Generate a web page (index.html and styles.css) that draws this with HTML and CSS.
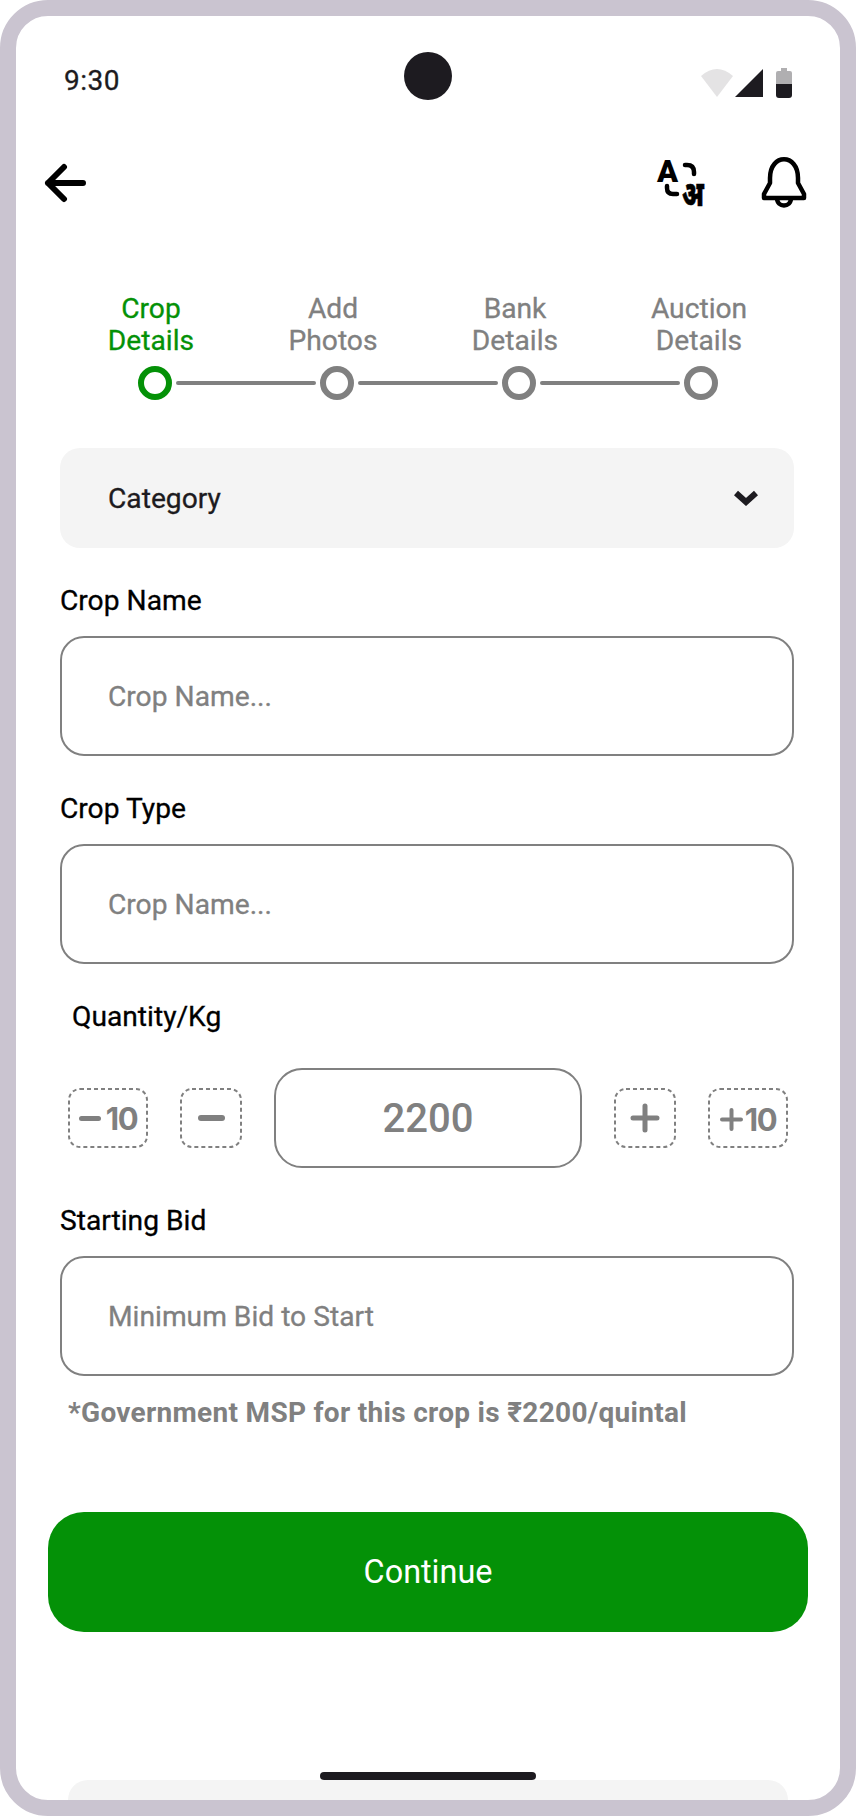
FILE: index.html
```html
<!DOCTYPE html>
<html lang="en">
<head>
  <meta charset="UTF-8">
  <meta name="viewport" content="width=device-width, initial-scale=1.0">
  <title>Crop Details</title>
  <link rel="stylesheet" href="styles.css">
</head>
<body>
  <div class="phone">
    <!-- status bar -->
    <div class="status">
      <span class="time">9:30</span>
      <span class="camera"></span>
      <div class="status-icons">
        <svg width="32" height="28" viewBox="0 0 32 28"><path d="M0 7 Q16 -7 32 7 L16 28 Z" fill="#1d1b20" opacity=".12"/></svg>
        <svg width="28" height="28" viewBox="0 0 28 28"><path d="M28 0 V28 H0 Z" fill="#1d1b20"/></svg>
        <svg class="battery" width="16" height="30" viewBox="0 0 16 30"><path d="M5 0 H11 V3 H14 Q16 3 16 5 V16 H0 V5 Q0 3 2 3 H5 Z" fill="#1d1b20" opacity=".35"/><path d="M0 16 H16 V27 Q16 30 13 30 H3 Q0 30 0 27 Z" fill="#1d1b20"/></svg>
      </div>
    </div>

    <!-- top bar -->
    <div class="topbar">
      <svg width="44" height="40" viewBox="0 0 44 40" fill="none" stroke="#000" stroke-width="6" stroke-linecap="round" stroke-linejoin="round"><path d="M39 20 H4 M20 4 L4 20 L20 36"/></svg>
      <div class="top-actions">
        <svg width="64" height="72" viewBox="0 0 64 72">
          <text x="7" y="35" class="lang-a">A</text>
          <text transform="translate(32 59) scale(.8 1.15)" class="lang-hi">अ</text>
          <path d="M35 18 H37 Q44 18 44 25 V27 M17 39 V41 Q17 47 23 47 H27" fill="none" stroke="#000" stroke-width="4.5" stroke-linecap="round"/>
        </svg>
        <svg width="46" height="52" viewBox="0 0 46 52" fill="none" stroke="#000" stroke-width="4.5" stroke-linejoin="round"><path d="M9 26 V21 C9 -4 37 -4 37 21 V26 L43 37 V41 H3 V37 Z"/><path d="M16 41 C16 51 30 51 30 41"/></svg>
      </div>
    </div>

    <!-- steps -->
    <div class="steps">
      <div class="step active">Crop<br>Details</div>
      <div class="step">Add<br>Photos</div>
      <div class="step">Bank<br>Details</div>
      <div class="step">Auction<br>Details</div>
    </div>
    <div class="track">
      <span class="dot active"></span><span class="bar"></span>
      <span class="dot"></span><span class="bar"></span>
      <span class="dot"></span><span class="bar"></span>
      <span class="dot"></span>
    </div>

    <div class="form">
      <div class="select">
        <span>Category</span>
        <svg width="24" height="16" viewBox="0 0 24 16" fill="none" stroke="#1d1b20" stroke-width="6"><path d="M2 3 L12 12 L22 3"/></svg>
      </div>

      <label class="label">Crop Name</label>
      <div class="input">Crop Name...</div>

      <label class="label">Crop Type</label>
      <div class="input">Crop Name...</div>

      <label class="label label-qty">Quantity/Kg</label>
      <div class="qty">
        <div class="qty-btn wide">
          <svg width="22" height="5" viewBox="0 0 22 5"><rect width="22" height="5" rx="2.5" fill="#808080"/></svg>
          <span>10</span>
        </div>
        <div class="qty-btn"><svg width="27" height="6" viewBox="0 0 27 6"><rect width="27" height="6" rx="3" fill="#808080"/></svg></div>
        <div class="qty-value">2200</div>
        <div class="qty-btn"><svg width="30" height="30" viewBox="0 0 30 30" stroke="#808080" stroke-width="5" stroke-linecap="round"><path d="M3 15 H27 M15 3 V27"/></svg></div>
        <div class="qty-btn wide plus">
          <svg width="23" height="23" viewBox="0 0 23 23" stroke="#808080" stroke-width="4" stroke-linecap="round"><path d="M2 11.5 H21 M11.5 2 V21"/></svg>
          <span>10</span>
        </div>
      </div>

      <label class="label">Starting Bid</label>
      <div class="input">Minimum Bid to Start</div>
      <p class="note">*Government MSP for this crop is ₹2200/quintal</p>
    </div>

    <button class="continue">Continue</button>

    <div class="bottom">
      <span class="home"></span>
      <div class="sheet"></div>
    </div>
  </div>
</body>
</html>
```

FILE: styles.css
```css
* {
  box-sizing: border-box;
}
body {
  margin: 0;
  background: #fff;
  font-family: Roboto, "Noto Sans", sans-serif;
}

.phone {
  width: 856px;
  height: 1816px;
  border: 16px solid #cac4d0;
  border-radius: 48px;
  background: #fff;
  display: flex;
  flex-direction: column;
  overflow: hidden;
}

/* status bar */
.status {
  display: flex;
  justify-content: space-between;
  align-items: center;
  height: 48px;
  margin-top: 36px;
  padding: 0 48px;
  position: relative;
}
.time {
  font-size: 28px;
  letter-spacing: .5px;
  -webkit-text-stroke: .3px;
  color: #1d1b20;
  margin-top: 8px;
}
.camera {
  position: absolute;
  left: 388px;
  top: 0;
  width: 48px;
  height: 48px;
  border-radius: 50%;
  background: #1d1b20;
}
.status-icons {
  display: flex;
  align-items: center;
  gap: 2px;
  margin-top: 14px;
}
.battery {
  margin-left: 11px;
}

/* top bar */
.topbar {
  display: flex;
  justify-content: space-between;
  align-items: center;
  margin-top: 47px;
  padding: 0 33px 0 28px;
}
.top-actions {
  display: flex;
  align-items: center;
  gap: 47px;
}
.lang-a {
  font: 900 31px Roboto, sans-serif;
}
.lang-hi {
  font: 900 30px "Noto Sans", sans-serif;
  stroke: #000;
  stroke-width: .6px;
}

/* steps */
.steps {
  display: grid;
  grid-template-columns: repeat(4, 182px);
  margin: 74px 0 0 44px;
}
.step, .select, .label, .input {
  font-size: 28.2px;
  -webkit-text-stroke: .3px;
}
.step {
  line-height: 32px;
  text-align: center;
  color: #808080;
}
.step:last-child {
  padding-left: 4px;
}
.step.active {
  color: #049107;
}
.track {
  display: flex;
  align-items: center;
  gap: 4px;
  margin: 9px 0 0 122px;
}
.dot {
  width: 34px;
  height: 34px;
  border: 6px solid #808080;
  border-radius: 50%;
}
.dot.active {
  border-color: #049107;
}
.bar {
  width: 140px;
  height: 4px;
  background: #808080;
  border-radius: 2px;
}

/* form */
.form {
  margin-top: 48px;
  padding: 0 46px 0 44px;
}
.select {
  display: flex;
  justify-content: space-between;
  align-items: center;
  height: 100px;
  padding: 0 36px 0 48px;
  border-radius: 20px;
  background: #f4f4f4;
  color: #1d1b20;
}
.label {
  display: block;
  margin: 36px 0 18px;
  line-height: 34px;
  color: #000;
}
.input {
  display: flex;
  align-items: center;
  height: 120px;
  padding-left: 46px;
  border: 2px solid #808080;
  border-radius: 24px;
  color: #808080;
}
.label-qty {
  margin-left: 12px;
}
.qty {
  display: flex;
  align-items: center;
  margin: 34px 0 0 8px;
}
.qty-btn {
  display: flex;
  justify-content: center;
  align-items: center;
  width: 62px;
  height: 60px;
  background: url("data:image/svg+xml,%3Csvg xmlns='http://www.w3.org/2000/svg' width='62' height='60'%3E%3Crect x='1' y='1' width='60' height='58' rx='11' fill='none' stroke='%23808080' stroke-width='2' stroke-dasharray='4 3'/%3E%3C/svg%3E");
  color: #808080;
  font: 700 31px Inter, sans-serif;
}
.qty-btn.wide {
  width: 80px;
  gap: 5px;
  letter-spacing: -1.5px;
  background-image: url("data:image/svg+xml,%3Csvg xmlns='http://www.w3.org/2000/svg' width='80' height='60'%3E%3Crect x='1' y='1' width='78' height='58' rx='11' fill='none' stroke='%23808080' stroke-width='2' stroke-dasharray='4 3'/%3E%3C/svg%3E");
}
.qty-btn.plus {
  gap: 2px;
  padding-top: 2px;
}
.qty-btn:nth-child(2) {
  margin-left: 32px;
}
.qty-btn:nth-child(4) {
  margin-left: 32px;
}
.qty-btn:nth-child(5) {
  margin-left: 32px;
}
.qty-value {
  display: flex;
  justify-content: center;
  align-items: center;
  width: 308px;
  height: 100px;
  margin-left: 32px;
  border: 2px solid #808080;
  border-radius: 28px;
  font-size: 40px;
  font-weight: 500;
  color: #808080;
}
.note {
  margin: 20px 0 0 8px;
  font-size: 28px;
  font-weight: 700;
  line-height: 34px;
  letter-spacing: .3px;
  color: #808080;
}
.continue {
  display: block;
  width: 760px;
  height: 120px;
  margin: 82px 0 0 32px;
  padding-bottom: 2px;
  border: 0;
  border-radius: 36px;
  background: #049107;
  color: #fff;
  font: 400 32.4px Roboto, sans-serif;
}

/* home indicator + sheet peeking in */
.bottom {
  margin-top: auto;
  display: flex;
  flex-direction: column;
  align-items: center;
}
.home {
  width: 216px;
  height: 8px;
  border-radius: 4px;
  background: #1d1b20;
}
.sheet {
  width: 720px;
  height: 20px;
  border-radius: 20px 20px 0 0;
  background: #f4f4f4;
}
```
